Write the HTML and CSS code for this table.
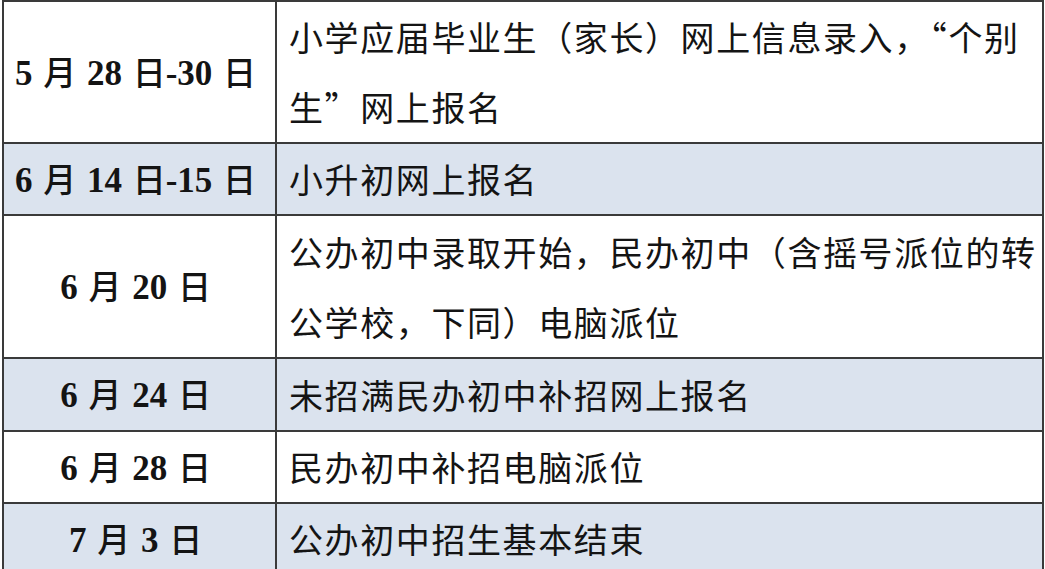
FILE: index.html
```html
<!DOCTYPE html>
<html lang="zh-CN">
<head>
<meta charset="utf-8">
<title>小升初时间安排</title>
<link rel="stylesheet" href="styles.css">
</head>
<body>
<table class="schedule">
  <colgroup>
    <col class="col-date">
    <col class="col-item">
  </colgroup>
  <tbody>
    <tr class="row row-1">
      <td class="date">5 <span class="cjk">月</span> 28 <span class="cjk">日</span>-30 <span class="cjk">日</span></td>
      <td class="item">小学应届毕业生（家长）网上信息录入，“个别生”网上报名</td>
    </tr>
    <tr class="row row-2 shaded">
      <td class="date">6 <span class="cjk">月</span> 14 <span class="cjk">日</span>-15 <span class="cjk">日</span></td>
      <td class="item">小升初网上报名</td>
    </tr>
    <tr class="row row-3">
      <td class="date">6 <span class="cjk">月</span> 20 <span class="cjk">日</span></td>
      <td class="item">公办初中录取开始，民办初中（含摇号派位的转公学校，下同）电脑派位</td>
    </tr>
    <tr class="row row-4 shaded">
      <td class="date">6 <span class="cjk">月</span> 24 <span class="cjk">日</span></td>
      <td class="item">未招满民办初中补招网上报名</td>
    </tr>
    <tr class="row row-5">
      <td class="date">6 <span class="cjk">月</span> 28 <span class="cjk">日</span></td>
      <td class="item">民办初中补招电脑派位</td>
    </tr>
    <tr class="row row-6 shaded">
      <td class="date">7 <span class="cjk">月</span> 3 <span class="cjk">日</span></td>
      <td class="item">公办初中招生基本结束</td>
    </tr>
  </tbody>
</table>
</body>
</html>
```

FILE: styles.css
```css
html, body {
  margin: 0;
  padding: 0;
  background: #ffffff;
}

body {
  padding: 0 1px 0 2px;
}

.schedule {
  width: 1042px;
  border-collapse: collapse;
  table-layout: fixed;
  color: #141414;
}

.col-date {
  width: 273px;
}

.schedule td {
  border: 2px solid #3a3a3a;
  vertical-align: middle;
  padding: 0;
}

.shaded td {
  background: #dbe3ee;
}

.row-1 { height: 141px; }
.row-2 { height: 70px; }
.row-3 { height: 143px; }
.row-4 { height: 73px; }
.row-5 { height: 71px; }
.row-6 { height: 69px; }

.date {
  text-align: center;
  padding-right: 8px !important;
  font-family: "Liberation Serif", "Noto Sans CJK SC", serif;
  font-weight: 700;
  font-size: 35px;
  line-height: 40px;
  white-space: nowrap;
  word-spacing: 2px;
}

.date .cjk {
  font-family: "Noto Sans CJK SC", sans-serif;
  font-weight: 500;
  font-size: 33px;
}

.item {
  padding-left: 12px !important;
  padding-right: 0 !important;
  font-family: "Noto Sans CJK SC", "Noto Sans CJK TC", sans-serif;
  font-weight: 400;
  font-size: 34px;
  letter-spacing: 1.6px;
  line-height: 70px;
}
```
